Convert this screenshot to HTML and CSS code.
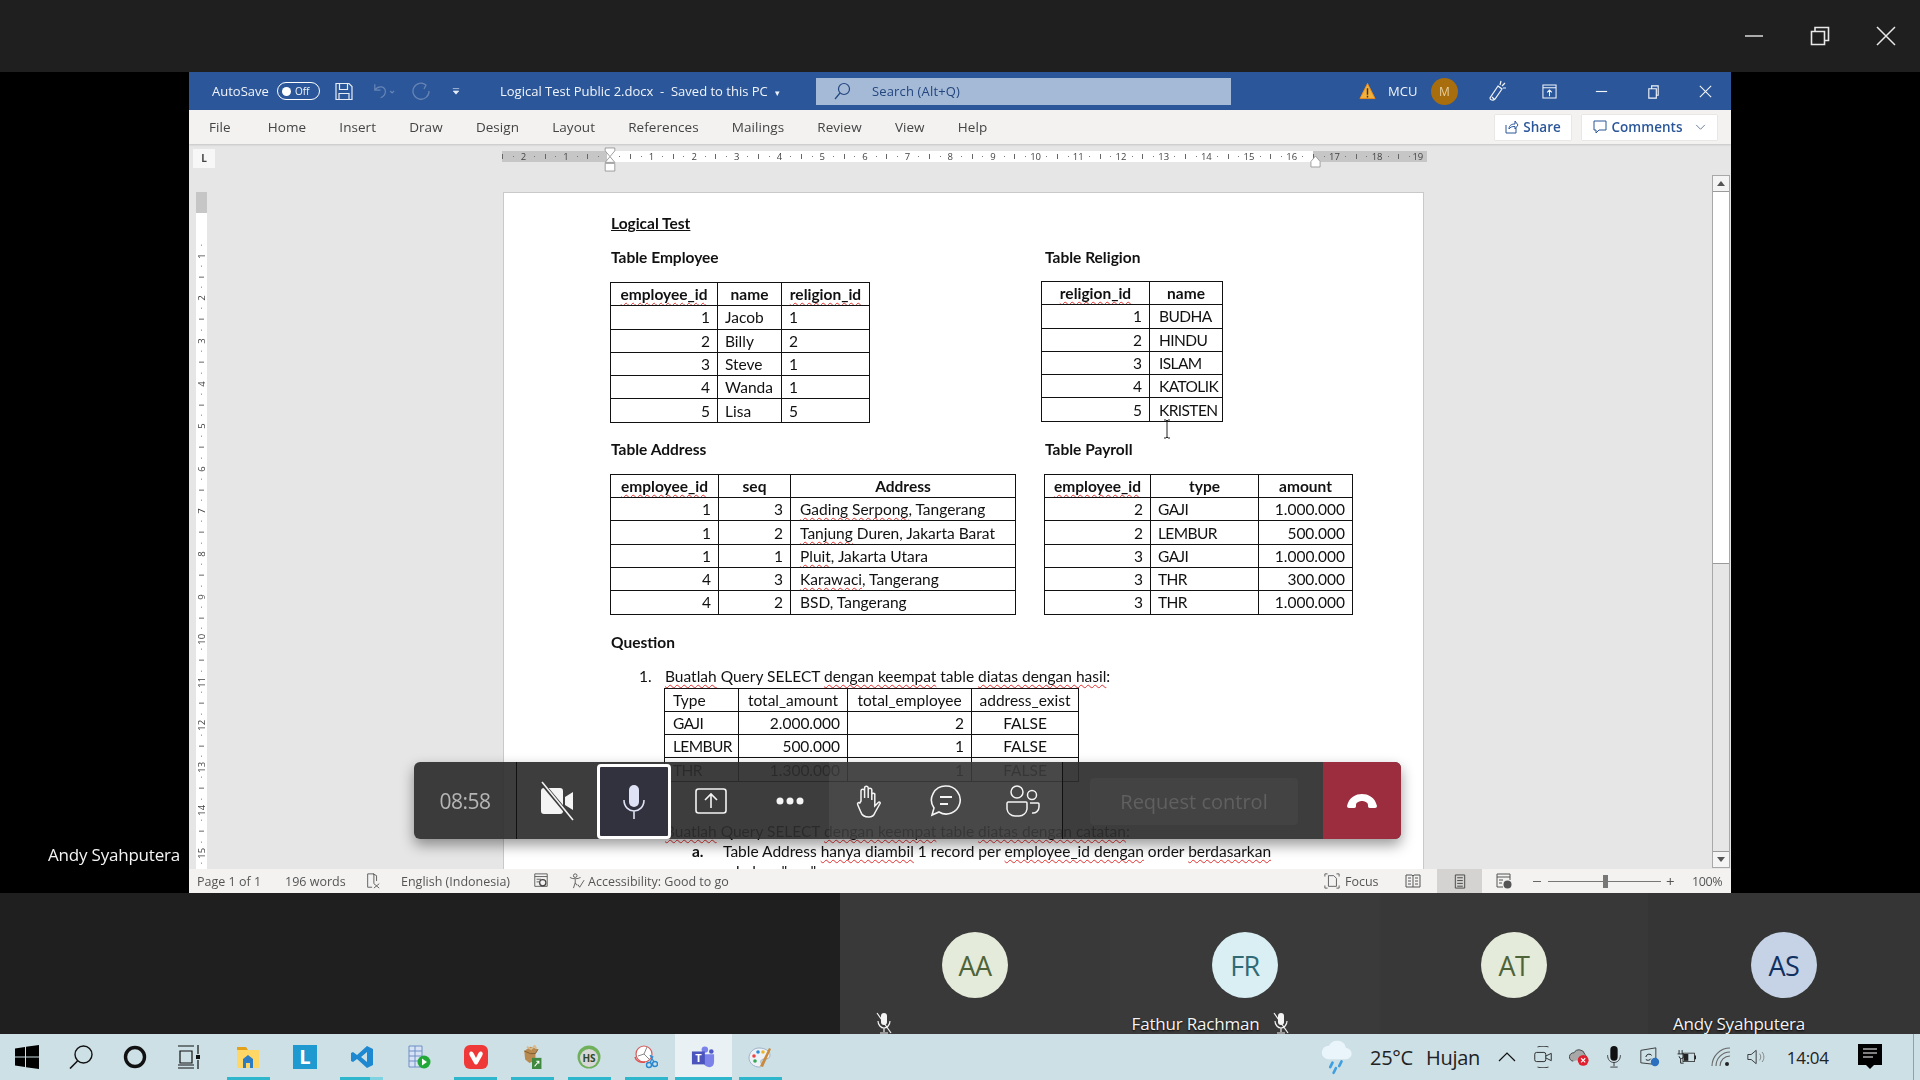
FILE: index.html
```html
<!DOCTYPE html>
<html lang="en">
<head>
    <meta charset="UTF-8">
    <title>Logical Test Public 2.docx - Word</title>
    <link rel="stylesheet" href="styles.css">
</head>
<body>
    <!-- Barra superior de la reunion -->
    <div class="topbar">
        <svg class="win-btn" viewBox="0 0 20 20"><path d="M1 10h18" stroke="#e8e8e8" stroke-width="1.4"/></svg>
        <svg class="win-btn" viewBox="0 0 20 20"><path d="M1.5 5.5h13v13h-13zM5 5.500V1.500h13.500v13h-4" fill="none" stroke="#e8e8e8" stroke-width="1.6"/></svg>
        <svg class="win-btn" viewBox="0 0 20 20"><path d="M1 1l18 18M19 1L1 19" stroke="#e8e8e8" stroke-width="1.5"/></svg>
    </div>

    <div class="stage">
        <div class="presenter-name">Andy Syahputera</div>

        <div class="word">
            <!-- Titulo -->
            <div class="word-title">
                <span class="autosave">AutoSave</span>
                <span class="toggle"><i></i>Off</span>
                <svg class="qa-save" viewBox="0 0 18 18"><path d="M1 1h13l3 3v13H1zM4.500 1v6h8V1M4 17v-6h10v6" fill="none" stroke="#e6ecf5" stroke-width="1.200"/></svg>
                <svg class="qa-undo" viewBox="0 0 26 18"><path d="M5 2v6h6M5 8c3-4 10-5 11 1 .5 3-2 6-5 7M21 9l2 2 2-2" fill="none" stroke="#6684b5" stroke-width="1.300"/></svg>
                <svg class="qa-redo" viewBox="0 0 22 18"><path d="M16 3A8 8 0 1 0 19 9M12 1l4 2-2 4" fill="none" stroke="#6684b5" stroke-width="1.300"/></svg>
                <svg class="qa-more" viewBox="0 0 10 10"><path d="M1 2h8M1.500 5h7L5 9z" fill="#e6ecf5" stroke="#e6ecf5" stroke-width=".8"/></svg>
                <span class="doc-name">Logical Test Public 2.docx &nbsp;-&nbsp; Saved to this PC &nbsp;<small>▾</small></span>
                <div class="search-box">
                    <svg viewBox="0 0 18 18"><circle cx="11" cy="7" r="5.500" fill="none" stroke="#23467f" stroke-width="1.200"/><path d="M7 11l-5 6" stroke="#23467f" stroke-width="1.200"/></svg>
                    <span>Search (Alt+Q)</span>
                </div>
                <div class="title-right">
                    <svg class="warn" viewBox="0 0 18 18"><path d="M9 1l8 16H1z" fill="#f2b13b" stroke="#e58a1f"/><path d="M9 6v7M9 14v2" stroke="#333" stroke-width="1.500"/></svg>
                    <span class="acct">MCU</span>
                    <span class="acct-avatar">M</span>
                    <span class="tb-cell tb-pen"><svg viewBox="0 0 20 22"><path d="M11 6l4 3-7 10c-2 2-5 1-5-1zM5 17l2 2M14 1l-1 4M18 3l-3 3M19 8l-3 0" fill="none" stroke="#f2f5fa" stroke-width="1.200"/></svg></span>
                    <span class="tb-cell"><svg viewBox="0 0 16 16"><path d="M1 1h14v14H1zM1 4h14M8 13V7M5.500 9L8 6.500 10.500 9" fill="none" stroke="#f2f5fa" stroke-width="1.100"/></svg></span>
                    <span class="tb-cell"><svg viewBox="0 0 16 16"><path d="M2 8h12" stroke="#f2f5fa" stroke-width="1.200"/></svg></span>
                    <span class="tb-cell"><svg viewBox="0 0 16 16"><path d="M3 5h8v10H3zM6 5V2h7v10h-2" fill="none" stroke="#f2f5fa" stroke-width="1.200"/></svg></span>
                    <span class="tb-cell"><svg viewBox="0 0 16 16"><path d="M2 2l12 12M14 2L2 14" stroke="#f2f5fa" stroke-width="1.200"/></svg></span>
                </div>
            </div>

            <!-- Pestanas -->
            <div class="word-tabs">
                <span class="tab tab-file">File</span>
                <span class="tab">Home</span>
                <span class="tab">Insert</span>
                <span class="tab">Draw</span>
                <span class="tab">Design</span>
                <span class="tab">Layout</span>
                <span class="tab">References</span>
                <span class="tab">Mailings</span>
                <span class="tab">Review</span>
                <span class="tab">View</span>
                <span class="tab">Help</span>
                <div class="tab-actions">
                    <span class="tab-btn share-btn"><svg viewBox="0 0 14 14"><path d="M1 5v8h10V8M4 9c0-4 3-5 6-5V1l3 4-3 4V6.500C7 6.500 5 7 4 9z" fill="none" stroke="#2b579a"/></svg>Share</span>
                    <span class="tab-btn comments-btn"><svg viewBox="0 0 14 14"><path d="M1 1h12v9H6l-3 3v-3H1z" fill="none" stroke="#2b579a"/></svg>Comments<svg class="chev" viewBox="0 0 12 8"><path d="M1 1l5 5 5-5" fill="none" stroke="#5c6f8f"/></svg></span>
                </div>
            </div>

            <!-- Regla horizontal -->
            <div class="ruler-row">
                <span class="tab-stop">L</span>
                <div class="ruler">
                    <span>2</span><span>1</span><span></span><span>1</span><span>2</span><span>3</span><span>4</span><span>5</span><span>6</span><span>7</span><span>8</span><span>9</span><span>10</span><span>11</span><span>12</span><span>13</span><span>14</span><span>15</span><span>16</span><span>17</span><span>18</span><span class="ruler-end">19</span>
                    <svg class="indent-left" viewBox="0 0 12 26"><path d="M1 1h10v3L6 10 1 4zM6 10l5 6H1zM1 17h10v8H1z" fill="#fff" stroke="#9a9a9a"/></svg>
                    <svg class="indent-right" viewBox="0 0 12 14"><path d="M6 1l5 6v6H1V7z" fill="#fff" stroke="#9a9a9a"/></svg>
                </div>
            </div>

            <div class="doc-body">
                <div class="vruler">
                    <span></span><span>1</span><span>2</span><span>3</span><span>4</span><span>5</span><span>6</span><span>7</span><span>8</span><span>9</span><span>10</span><span>11</span><span>12</span><span>13</span><span>14</span><span>15</span>
                </div>

                <div class="canvas">
                    <div class="page">
                        <p class="doc-title">Logical Test</p>

                        <div class="doc-grid">
                            <section>
                                <h4>Table Employee</h4>
                                <table class="tbl tbl-employee">
                                    <tr><th><u>employee_id</u></th><th>name</th><th><u>religion_id</u></th></tr>
                                    <tr><td class="num">1</td><td>Jacob</td><td>1</td></tr>
                                    <tr><td class="num">2</td><td>Billy</td><td>2</td></tr>
                                    <tr><td class="num">3</td><td>Steve</td><td>1</td></tr>
                                    <tr><td class="num">4</td><td>Wanda</td><td>1</td></tr>
                                    <tr><td class="num">5</td><td>Lisa</td><td>5</td></tr>
                                </table>
                            </section>
                            <section>
                                <h4>Table Religion</h4>
                                <table class="tbl tbl-religion">
                                    <tr><th><u>religion_id</u></th><th>name</th></tr>
                                    <tr><td class="num">1</td><td class="caps">BUDHA</td></tr>
                                    <tr><td class="num">2</td><td class="caps">HINDU</td></tr>
                                    <tr><td class="num">3</td><td class="caps">ISLAM</td></tr>
                                    <tr><td class="num">4</td><td class="caps">KATOLIK</td></tr>
                                    <tr><td class="num">5</td><td class="caps">KRISTEN</td></tr>
                                </table>
                            </section>
                            <section>
                                <h4>Table Address</h4>
                                <table class="tbl tbl-address">
                                    <tr><th><u>employee_id</u></th><th>seq</th><th>Address</th></tr>
                                    <tr><td class="num">1</td><td class="num">3</td><td><u>Gading Serpong</u>, Tangerang</td></tr>
                                    <tr><td class="num">1</td><td class="num">2</td><td><u>Tanjung</u> Duren, Jakarta Barat</td></tr>
                                    <tr><td class="num">1</td><td class="num">1</td><td><u>Pluit</u>, Jakarta Utara</td></tr>
                                    <tr><td class="num">4</td><td class="num">3</td><td><u>Karawaci</u>, Tangerang</td></tr>
                                    <tr><td class="num">4</td><td class="num">2</td><td>BSD, Tangerang</td></tr>
                                </table>
                            </section>
                            <section>
                                <h4>Table Payroll</h4>
                                <table class="tbl tbl-payroll">
                                    <tr><th><u>employee_id</u></th><th>type</th><th>amount</th></tr>
                                    <tr><td class="num">2</td><td class="caps">GAJI</td><td class="num">1.000.000</td></tr>
                                    <tr><td class="num">2</td><td class="caps">LEMBUR</td><td class="num">500.000</td></tr>
                                    <tr><td class="num">3</td><td class="caps">GAJI</td><td class="num">1.000.000</td></tr>
                                    <tr><td class="num">3</td><td class="caps">THR</td><td class="num">300.000</td></tr>
                                    <tr><td class="num">3</td><td class="caps">THR</td><td class="num">1.000.000</td></tr>
                                </table>
                            </section>
                        </div>

                        <h4 class="question">Question</h4>
                        <p class="li"><b>1.</b><span><u>Buatlah</u> Query SELECT <u>dengan keempat</u> table <u>diatas dengan hasil</u>:</span></p>
                        <table class="tbl tbl-result">
                            <tr><td>Type</td><td class="mid">total_amount</td><td class="mid">total_employee</td><td class="mid">address_exist</td></tr>
                            <tr><td class="caps">GAJI</td><td class="num">2.000.000</td><td class="num">2</td><td class="mid">FALSE</td></tr>
                            <tr><td class="caps">LEMBUR</td><td class="num">500.000</td><td class="num">1</td><td class="mid">FALSE</td></tr>
                            <tr><td class="caps">THR</td><td class="num">1.300.000</td><td class="num">1</td><td class="mid">FALSE</td></tr>
                        </table>
                        <p class="li li-two"><b>2.</b><span><u>Buatlah</u> Query SELECT <u>dengan keempat</u> table <u>diatas dengan catatan</u>:</span></p>
                        <p class="li li-sub"><b>a.</b><span>Table Address <u>hanya diambil</u> 1 record per <u>employee_id dengan</u> order <u>berdasarkan</u></span></p>
                        <p class="li-cont">kolom "seq"</p>
                    </div>
                    <svg class="ibeam" viewBox="0 0 10 20"><path d="M2 1h2l1 1 1-1h2M5 2v16M2 19h2l1-1 1 1h2" fill="none" stroke="#222"/></svg>
                </div>

                <div class="vscroll">
                    <span class="sb-btn"><i class="arrow-up"></i></span>
                    <span class="sb-thumb"></span>
                    <span class="sb-btn sb-down"><i class="arrow-down"></i></span>
                </div>
            </div>

            <!-- Barra de estado -->
            <div class="word-status">
                <span class="st-page">Page 1 of 1</span>
                <span class="st-words">196 words</span>
                <svg class="st-ico" viewBox="0 0 16 18"><path d="M2 1h7v11M2 1v15h5M8 1l4 2v6M9 12l6 5M15 12l-6 5" fill="none" stroke="#555"/></svg>
                <span class="st-lang">English (Indonesia)</span>
                <svg class="st-ico st-macro" viewBox="0 0 16 18"><path d="M1 1h14v14H1zM1 4h14M3 7h5M3 10h3" fill="none" stroke="#555"/><circle cx="10" cy="11" r="3.500" fill="none" stroke="#444" stroke-width="1.400"/></svg>
                <svg class="st-ico st-access" viewBox="0 0 18 18"><circle cx="7" cy="3" r="2" fill="none" stroke="#555"/><path d="M1 5c3 2 9 2 12 0M7 7v4M5 17l2-6 2 3M10 13l2 3 5-8" fill="none" stroke="#555"/></svg>
                <span class="st-access-text">Accessibility: Good to go</span>
                <div class="st-right">
                    <svg class="st-ico" viewBox="0 0 18 18"><path d="M5 3h6l3 3v9H5zM1 4V1h3M17 4V1h-3M1 14v3h3M17 14v3h-3" fill="none" stroke="#555"/></svg>
                    <span class="st-focus">Focus</span>
                    <svg class="st-ico st-read" viewBox="0 0 16 16"><path d="M1 2h6l1 1 1-1h6v12H1zM8 3v11M3 5h3M3 8h3M3 11h3M10 5h3M10 8h3M10 11h3" fill="none" stroke="#555"/></svg>
                    <span class="st-print"><svg viewBox="0 0 12 16"><path d="M1 1h10v14H1zM3 4h6M3 7h6M3 10h6M3 13h6" fill="none" stroke="#444"/></svg></span>
                    <svg class="st-ico st-web" viewBox="0 0 16 16"><path d="M1 1h13v6M1 1v13h6M1 4h13M3 7h4M3 10h3" fill="none" stroke="#555"/><circle cx="11.500" cy="11.500" r="4" fill="#555"/></svg>
                    <span class="zoom-minus"></span>
                    <span class="zoom-track"><i></i></span>
                    <span class="zoom-plus">+</span>
                    <span class="zoom-val">100%</span>
                </div>
            </div>
        </div>

        <!-- Controles de la llamada -->
        <div class="call-bar">
            <span class="call-timer">08:58</span>
            <span class="call-btn btn-video"><svg viewBox="0 0 36 40"><path d="M2 10a3 3 0 0 1 3-3h16a3 3 0 0 1 3 3v20a3 3 0 0 1-3 3H5a3 3 0 0 1-3-3zM26 16l8-5v18l-8-5z" fill="#f4f4f4"/><path d="M3 2l30 36" stroke="#3a3a3a" stroke-width="4"/><path d="M3 1l31 38" stroke="#f4f4f4" stroke-width="1.600"/></svg></span>
            <span class="call-btn btn-mic"><svg viewBox="0 0 24 36"><rect x="7" y="1" width="10" height="22" rx="5" fill="#dfe1f5"/><path d="M2 16c0 7 5 11 10 11s10-4 10-11M12 27v8" fill="none" stroke="#dfe1f5" stroke-width="1.600"/></svg></span>
            <span class="call-btn btn-share"><svg viewBox="0 0 32 26"><rect x="1" y="1" width="30" height="24" rx="2.500" fill="none" stroke="#f4f4f4" stroke-width="1.600"/><path d="M16 20V6M10 12l6-6 6 6" fill="none" stroke="#f4f4f4" stroke-width="1.600"/></svg></span>
            <span class="call-btn btn-more"><svg viewBox="0 0 28 8"><circle cx="4" cy="4" r="3.500" fill="#f4f4f4"/><circle cx="14" cy="4" r="3.500" fill="#f4f4f4"/><circle cx="24" cy="4" r="3.500" fill="#f4f4f4"/></svg></span>
            <div class="call-lit">
                <span class="call-btn btn-hand"><svg viewBox="0 0 28 34"><path d="M7 17V7a1.800 1.800 0 0 1 3.600 0v7-10a1.800 1.800 0 0 1 3.600 0v10-8a1.800 1.800 0 0 1 3.600 0v10-6a1.800 1.800 0 0 1 3 0v12l3-3c2-2 3 0 2 1l-5 9c-1 3-3 4-6 4-4 0-7-2-8-5l-3-7c-1-2 1-3 2-2z" fill="none" stroke="#f4f4f4" stroke-width="1.500"/></svg></span>
                <span class="call-btn btn-chat"><svg viewBox="0 0 32 32"><path d="M16 1a14 14 0 1 1-7 26l-7 3 2-7A14 14 0 0 1 16 1z" fill="none" stroke="#f4f4f4" stroke-width="1.600"/><path d="M10 12h12M10 19h8" stroke="#f4f4f4" stroke-width="1.800"/></svg></span>
                <span class="call-btn btn-people"><svg viewBox="0 0 34 32"><circle cx="11" cy="7" r="6" fill="none" stroke="#f4f4f4" stroke-width="1.500"/><circle cx="26" cy="10" r="4.500" fill="none" stroke="#f4f4f4" stroke-width="1.500"/><path d="M2 17h18a1 1 0 0 1 1 1v6a8 8 0 0 1-8 7H9a8 8 0 0 1-8-7v-6zM24 18h8a1 1 0 0 1 1 1v3a6 6 0 0 1-7 6" fill="none" stroke="#f4f4f4" stroke-width="1.500"/></svg></span>
            </div>
            <span class="call-request">Request control</span>
            <span class="call-end"><svg viewBox="0 0 32 16"><path d="M1 13C3 4 10 1 16 1s13 3 15 12c0 2-2 2-3 2h-4c-2 0-2-1-2-3 0-3-4-4-6-4s-6 1-6 4c0 2 0 3-2 3H4c-1 0-3 0-3-2z" fill="#fff"/></svg></span>
        </div>
    </div>

    <!-- Participantes -->
    <div class="tiles">
        <div class="tile-blank"></div>
        <div class="tile tile-a">
            <span class="avatar av-green">AA</span>
            <span class="tile-name name-aa"><svg class="mute" viewBox="0 0 18 22"><rect x="6" y="1" width="6" height="12" rx="3" fill="#f4f4f4"/><path d="M3 9c0 4 3 7 6 7s6-3 6-7M9 16v4M5 21h8M2 1l14 20" fill="none" stroke="#f4f4f4" stroke-width="1.200"/></svg></span>
        </div>
        <div class="tile tile-b">
            <span class="avatar av-cyan">FR</span>
            <span class="tile-name name-fr">Fathur Rachman<svg class="mute" viewBox="0 0 18 22"><rect x="6" y="1" width="6" height="12" rx="3" fill="#f4f4f4"/><path d="M3 9c0 4 3 7 6 7s6-3 6-7M9 16v4M5 21h8M2 1l14 20" fill="none" stroke="#f4f4f4" stroke-width="1.200"/></svg></span>
        </div>
        <div class="tile tile-c">
            <span class="avatar av-green">AT</span>
        </div>
        <div class="tile tile-d">
            <span class="avatar av-blue">AS</span>
            <span class="tile-name name-as">Andy Syahputera</span>
        </div>
    </div>

    <!-- Barra de tareas -->
    <div class="taskbar">
        <span class="tk-sys"><svg viewBox="0 0 24 24"><path d="M0 3.500l10-1.500v9.500H0zM11 1.800L24 0v11.500H11zM0 12.500h10V22L0 20.500zM11 12.500h13V24l-13-1.800z" fill="#000"/></svg></span>
        <span class="tk-sys"><svg viewBox="0 0 24 24"><circle cx="14.500" cy="9.500" r="8.500" fill="none" stroke="#111" stroke-width="1.400"/><path d="M8.500 16L1 23.500" stroke="#111" stroke-width="1.600"/></svg></span>
        <span class="tk-sys"><svg viewBox="0 0 24 24"><circle cx="12" cy="12" r="9.500" fill="none" stroke="#111" stroke-width="3.400"/></svg></span>
        <span class="tk-sys tk-last"><svg viewBox="0 0 24 24"><path d="M1 1h16M1 23h16M1 4h0M3 6h12v12H3zM1 20h16M21 0v9M21 15v9" fill="none" stroke="#111" stroke-width="1.200"/><rect x="19" y="10" width="4" height="4" fill="#111"/></svg></span>

        <span class="tk-app running"><svg viewBox="0 0 24 24"><path d="M1 2h9l2 3H1z" fill="#e3a21a"/><path d="M1 5h22v18H1z" fill="#ffd766"/><path d="M7 23v-9l5-4 5 4v9h-3v-5h-4v5z" fill="#2d7dc4"/></svg></span>
        <span class="tk-app"><span class="app-l">L</span></span>
        <span class="tk-app running run-split"><svg viewBox="0 0 24 24"><path d="M17 1l6 3v16l-6 3L7 14l-4 3-2-1V8l2-1 4 3zM17 7l-6 5 6 5z" fill="#1e88d0"/></svg></span>
        <span class="tk-app"><svg viewBox="0 0 24 24"><path d="M2 1h13v21H2zM2 6h13M2 11h13M2 16h13M8 1v21" fill="#d7e3f5" stroke="#6f8fc7"/><circle cx="17" cy="17" r="6.500" fill="#22a838"/><path d="M15 13.500l5 3.500-5 3.500z" fill="#fff"/></svg></span>
        <span class="tk-app running"><svg viewBox="0 0 24 24"><rect x="0" y="0" width="24" height="24" rx="6" fill="#ef3939"/><path d="M6 7c2-1 3 0 4 2l2 4 2-4c1-2 2-3 4-2 1 1 1 2 0 4l-4 7c-1 2-3 2-4 0l-4-7c-1-2-1-3 0-4z" fill="#fff"/></svg></span>
        <span class="tk-app running"><svg viewBox="0 0 24 28"><path d="M3 7l7-5 9 3-3 5v8l-7 3-5-4z" fill="#b98a50"/><path d="M3 7l7 3 6 0 3-5" fill="none" stroke="#7a5829"/><path d="M6 2l5 3 4-4 2 3" fill="none" stroke="#d9b98a" stroke-width="2"/><rect x="12" y="15" width="11" height="13" fill="#3f8a3f"/><path d="M15 25l5-6M17 19h3v3" fill="none" stroke="#fff" stroke-width="1.200"/></svg></span>
        <span class="tk-app running"><svg viewBox="0 0 24 24"><circle cx="12" cy="12" r="11.500" fill="#6fb05b"/><circle cx="12" cy="13" r="9" fill="#d8d8d8"/><text x="12" y="17" text-anchor="middle" class="hs-text">HS</text></svg></span>
        <span class="tk-app running"><svg viewBox="0 0 24 24"><circle cx="10" cy="9" r="8" fill="#fff" stroke="#d65a5a" stroke-width="1.200"/><path d="M10 9l3-7M10 9l-6 2M10 9l5 5" stroke="#888"/><path d="M1 12c1 4 5 6 10 5" fill="none" stroke="#e05050" stroke-width="1.500"/><circle cx="15" cy="20" r="2.500" fill="none" stroke="#2a88d0" stroke-width="1.400"/><circle cx="21" cy="19" r="2.500" fill="none" stroke="#2a88d0" stroke-width="1.400"/><path d="M16 18l3-7M20 17l-4-7" stroke="#2a88d0" stroke-width="1.200"/></svg></span>
        <span class="tk-app running active"><svg viewBox="0 0 26 24"><circle cx="15" cy="4" r="3.500" fill="#7b83eb"/><circle cx="22" cy="6" r="2.500" fill="#5059c9"/><path d="M12 9h13v8c0 4-2 6-5 6s-6-2-8-6z" fill="#7b83eb"/><rect x="1" y="6" width="14" height="14" fill="#4b53bc"/><text x="8" y="17" text-anchor="middle" class="teams-text">T</text></svg></span>
        <span class="tk-app running"><svg viewBox="0 0 24 24"><path d="M11 3C5 3 1 8 1 13s5 9 10 9c3 0 3-2 2-4-1-3 1-4 4-4 3 0 5-1 5-4 0-4-5-7-11-7z" fill="#eef2f7" stroke="#9eb4cc"/><circle cx="6" cy="11" r="1.800" fill="#e44"/><circle cx="10" cy="7" r="1.800" fill="#2a8ad8"/><circle cx="15" cy="7" r="1.800" fill="#e8b72a"/><circle cx="7" cy="16" r="1.800" fill="#35a853"/><path d="M12 21L21 3l2 1-8 18z" fill="#c98a3c"/></svg></span>

        <div class="tray">
            <svg class="tray-rain" viewBox="0 0 32 32"><path d="M8 18a6 6 0 0 1 1-12 8 8 0 0 1 15 2 5 5 0 0 1 0 10z" fill="#eaf4fb"/><path d="M12 21l-2 4M20 20l-2 4M15 26l-2 4" stroke="#3f9fe0" stroke-width="2.400" stroke-linecap="round"/></svg>
            <span class="tray-temp">25°C</span>
            <span class="tray-cond">Hujan</span>
            <span class="tray-cell tray-chev"><svg viewBox="0 0 18 10"><path d="M1 9l8-8 8 8" fill="none" stroke="#111" stroke-width="1.200"/></svg></span>
            <span class="tray-cell"><svg viewBox="0 0 20 24"><path d="M4 1c3-1 9-1 12 0M4 23c3 1 9 1 12 0" fill="none" stroke="#333"/><rect x="1" y="7" width="12" height="10" rx="2" fill="none" stroke="#222"/><path d="M13 11l6-3v8l-6-3" fill="none" stroke="#222"/></svg></span>
            <span class="tray-cell"><svg viewBox="0 0 24 22"><path d="M5 16a5 5 0 0 1 1-10 7 7 0 0 1 13 2 4 4 0 0 1 2 4" fill="#a8a8a8" stroke="#333"/><circle cx="17" cy="15" r="6.500" fill="#e0202f"/><path d="M14.500 12.500l5 5M19.500 12.500l-5 5" stroke="#fff" stroke-width="1.300"/></svg></span>
            <span class="tray-cell"><svg viewBox="0 0 16 24"><rect x="4" y="0" width="8" height="16" rx="4" fill="#111"/><path d="M1 10c0 5 3 8 7 8s7-3 7-8M8 18v4M4 23h8" fill="none" stroke="#333"/></svg></span>
            <span class="tray-cell"><svg viewBox="0 0 24 24"><path d="M1 4l18-3v20L1 19z" fill="none" stroke="#222"/><path d="M7 12a4 4 0 0 1 7-2M13 14a4 4 0 0 1-6 1" fill="none" stroke="#222" stroke-width="1.200"/><circle cx="18" cy="18" r="5" fill="#2c6fbf"/></svg></span>
            <span class="tray-cell"><svg viewBox="0 0 26 20"><path d="M4 1v5M8 1v5M2 6h8v3a3 3 0 0 1-6 0M6 12v6h4" fill="none" stroke="#222" stroke-width="1.200"/><rect x="9" y="5" width="15" height="11" fill="none" stroke="#222"/><rect x="10" y="6" width="6" height="9" fill="#222"/><path d="M24 8h2v5h-2" fill="#222"/></svg></span>
            <span class="tray-cell"><svg viewBox="0 0 20 20"><path d="M1 19A18 18 0 0 1 19 1M5 19A14 14 0 0 1 19 5M9 19A10 10 0 0 1 19 9" fill="none" stroke="#666" stroke-width="1.100"/><circle cx="16" cy="17" r="2" fill="#222"/></svg></span>
            <span class="tray-cell"><svg viewBox="0 0 24 20"><path d="M1 7h4l6-5v16l-6-5H1z" fill="none" stroke="#222"/><path d="M15 6c2 2 2 6 0 8M18 4c3 3 3 9 0 12" fill="none" stroke="#777"/></svg></span>
            <span class="tray-time">14:04</span>
            <span class="tray-notif"><svg viewBox="0 0 24 26"><path d="M0 0h24v21h-8l-4 4-4-4H0z" fill="#000"/><path d="M5 5h14M5 9h14M5 13h10" stroke="#fff" stroke-width="1.200"/></svg></span>
            <span class="show-desktop"></span>
        </div>
    </div>
</body>
</html>
```

FILE: styles.css
```css
body {
    margin: 0;
    width: 1920px;
    height: 1080px;
    overflow: hidden;
    background: #000;
    font-family: "Open Sans", sans-serif;
    display: flex;
    flex-direction: column;
}

svg {
    display: block;
}

/* Barra superior */
.topbar {
    height: 72px;
    background: #1f1f1f;
    display: flex;
    justify-content: flex-end;
    align-items: center;
    gap: 46px;
    padding-right: 24px;
    box-sizing: border-box;
}

.win-btn {
    width: 20px;
    height: 20px;
}

/* Zona central */
.stage {
    height: 821px;
    background: #000;
    display: flex;
    justify-content: center;
    position: relative;
    filter: blur(0.35px);
}

.presenter-name {
    position: absolute;
    left: 48px;
    top: 771px;
    color: #f4f4f4;
    font-size: 17px;
    letter-spacing: -0.2px;
}

.word {
    width: 1542px;
    display: flex;
    flex-direction: column;
    background: #e6e6e6;
}

/* Titulo de Word */
.word-title {
    height: 38px;
    background: #2b579a;
    display: flex;
    align-items: center;
    color: #f0f3f8;
    font-size: 13px;
    flex: none;
}

.autosave {
    margin-left: 23px;
    width: 58px;
}

.toggle {
    margin-left: 7px;
    width: 43px;
    height: 18px;
    box-sizing: border-box;
    border: 1px solid #fff;
    border-radius: 9px;
    display: flex;
    align-items: center;
    font-size: 10px;
    gap: 4px;
    padding-left: 4px;
}

.toggle i {
    width: 9px;
    height: 9px;
    border-radius: 50%;
    background: #fff;
}

.qa-save { margin-left: 15px; width: 18px; height: 19px; }
.qa-undo { margin-left: 17px; width: 25px; height: 18px; }
.qa-redo { margin-left: 15px; width: 22px; height: 18px; }
.qa-more { margin-left: 20px; width: 8px; height: 8px; }

.doc-name {
    margin-left: 40px;
    width: 316px;
    white-space: nowrap;
}

.doc-name small {
    font-size: 9px;
}

.search-box {
    width: 415px;
    height: 27px;
    background: #a5bad7;
    display: flex;
    align-items: center;
    color: #23467f;
    padding-left: 17px;
    box-sizing: border-box;
    gap: 21px;
    letter-spacing: 0.15px;
}

.search-box svg {
    width: 18px;
    height: 18px;
}

.title-right {
    margin-left: auto;
    display: flex;
    align-items: center;
}

.warn {
    width: 17px;
    height: 18px;
    margin-right: 12px;
}

.acct {
    width: 43px;
}

.acct-avatar {
    width: 27px;
    height: 27px;
    border-radius: 50%;
    background: #a86d0c;
    color: #e7cf9f;
    font-size: 12px;
    display: flex;
    align-items: center;
    justify-content: center;
    margin-right: 13px;
}

.tb-cell {
    width: 52px;
    display: flex;
    justify-content: center;
}

.tb-cell svg {
    width: 15px;
    height: 15px;
}

.tb-cell.tb-pen svg {
    width: 20px;
    height: 22px;
}

/* Pestanas */
.word-tabs {
    height: 34px;
    background: #f3f2f1;
    display: flex;
    align-items: center;
    gap: 33.200px;
    padding-left: 20px;
    padding-right: 14px;
    color: #444;
    font-size: 13.500px;
    letter-spacing: 0.05px;
    box-shadow: 0 1px 2px rgba(0, 0, 0, 0.15);
    flex: none;
    position: relative;
}

.tab-file {
    margin-right: 4px;
}

.tab-actions {
    margin-left: auto;
    display: flex;
    gap: 11px;
}

.tab-btn {
    height: 25px;
    background: #fff;
    display: flex;
    align-items: center;
    justify-content: center;
    gap: 4px;
    color: #2b579a;
    font-weight: 600;
    font-size: 13.500px;
    box-shadow: 0 0 1px rgba(0, 0, 0, 0.25);
}

.tab-btn svg {
    width: 14px;
    height: 14px;
}

.share-btn { width: 76px; }
.comments-btn { width: 135px; }

.tab-btn .chev {
    width: 11px;
    height: 7px;
    margin-left: 8px;
}

/* Regla horizontal */
.ruler-row {
    height: 32px;
    display: flex;
    align-items: flex-start;
    flex: none;
}

.tab-stop {
    margin: 5px 0 0 4px;
    width: 22px;
    height: 19px;
    background: #f7f7f7;
    font-size: 10px;
    font-weight: 700;
    color: #444;
    text-align: center;
    line-height: 19px;
}

.ruler {
    margin: 7px 0 0 287px;
    width: 925px;
    height: 11px;
    display: flex;
    position: relative;
    background: linear-gradient(to right, #c6c6c6 105px, #fff 105px, #fff 811px, #c6c6c6 811px);
}

.ruler span {
    flex: none;
    width: 42.700px;
    font-size: 9.500px;
    line-height: 11px;
    color: #444;
    text-align: center;
    background:
        linear-gradient(#666, #666) 0 50% / 1px 5px no-repeat,
        linear-gradient(#777, #777) 10.700px 50% / 1px 1px no-repeat,
        linear-gradient(#777, #777) 32px 50% / 1px 1px no-repeat;
}

.ruler .ruler-end {
    width: 25px;
    text-align: left;
    text-indent: 14px;
    background-size: 1px 5px, 1px 1px, 0 0;
}

.indent-left {
    position: absolute;
    left: 102px;
    top: -4px;
    width: 12px;
    height: 25px;
}

.indent-right {
    position: absolute;
    left: 808px;
    top: 4px;
    width: 11px;
    height: 13px;
}

/* Documento */
.doc-body {
    flex: 1;
    display: flex;
    min-height: 0;
}

.vruler {
    margin: 16px 0 0 7px;
    width: 11px;
    flex: none;
    background: linear-gradient(#c6c6c6 21px, #fff 21px);
}

.vruler span {
    display: flex;
    align-items: center;
    justify-content: center;
    height: 42.650px;
    font-size: 9.500px;
    line-height: 11px;
    color: #444;
    writing-mode: vertical-rl;
    transform: rotate(180deg);
    background:
        linear-gradient(#666, #666) 50% 0 / 5px 1px no-repeat,
        linear-gradient(#777, #777) 50% 10.700px / 1px 1px no-repeat,
        linear-gradient(#777, #777) 50% 32px / 1px 1px no-repeat;
}

.canvas {
    flex: 1;
    overflow: hidden;
    position: relative;
}

.page {
    margin: 17px 0 0 297px;
    width: 919px;
    height: 900px;
    box-sizing: border-box;
    background: #fff;
    outline: 1px solid #c9c9c9;
    padding: 20px 0 0 107px;
    color: #111;
    font-family: Lato, "Open Sans", sans-serif;
    font-size: 15.500px;
}

.page p,
.page h4 {
    margin: 0;
    height: 20px;
    line-height: 20px;
    white-space: nowrap;
}

.page h4 {
    font-size: 15.500px;
    font-weight: 700;
}

.page u {
    text-decoration: underline wavy #e03030 1px;
    text-underline-offset: 2px;
    text-decoration-skip-ink: none;
}

.doc-title {
    font-weight: 700;
    text-decoration: underline;
    margin-bottom: 14px !important;
}

.doc-grid {
    display: grid;
    grid-template-columns: 434px 1fr;
    row-gap: 16px;
}

.doc-grid h4 {
    margin-bottom: 15px;
}

/* Tablas */
.tbl {
    border-collapse: collapse;
    table-layout: fixed;
    margin-left: -1px;
}

.tbl th,
.tbl td {
    border: 1.500px solid #111;
    height: 23.300px;
    padding: 0 7px 0 7px;
    box-sizing: border-box;
    white-space: nowrap;
    overflow: hidden;
}

.tbl th {
    font-weight: 700;
    text-align: center;
    padding: 0;
}

.tbl td.num { text-align: right; }
.tbl td.mid { text-align: center; padding: 0; }
.tbl td.caps { letter-spacing: -0.6px; }

.tbl-employee { width: 260px; }
.tbl-employee th:nth-child(1) { width: 107px; }
.tbl-employee th:nth-child(2) { width: 64px; }

.tbl-religion { width: 182px; margin: -1px 0 0 -4px; }
.tbl-religion th:nth-child(1) { width: 108px; }
.tbl-religion td { padding-left: 9px; }

.tbl-address { width: 406px; }
.tbl-address th:nth-child(1) { width: 108px; }
.tbl-address th:nth-child(2) { width: 72px; }
.tbl-address td { padding-left: 9px; }

.tbl-payroll { width: 309px; }
.tbl-payroll th:nth-child(1) { width: 106px; }
.tbl-payroll th:nth-child(2) { width: 108px; }

.tbl-result {
    width: 415px;
    margin: 2px 0 0 53px;
}

.tbl-result td:nth-child(1) { width: 74px; padding-left: 8px; }
.tbl-result td:nth-child(2) { width: 109px; }
.tbl-result td:nth-child(3) { width: 124px; }

.question {
    margin-top: 17px !important;
    margin-bottom: 14px !important;
}

.li {
    display: flex;
    padding-left: 28px;
}

.li b {
    width: 26px;
    flex: none;
    font-weight: 400;
}

.li-two {
    margin-top: 39px !important;
}

.li-sub {
    padding-left: 81px;
}

.li-sub b {
    width: 31px;
    font-weight: 700;
}

.li-cont {
    padding-left: 125px;
}

.ibeam {
    position: absolute;
    left: 955px;
    top: 243px;
    width: 10px;
    height: 20px;
}

/* Barra de desplazamiento */
.vscroll {
    width: 16px;
    margin: 0 2px 2px 0;
    flex: none;
    display: flex;
    flex-direction: column;
    background: #e6e6e6;
    outline: 1px solid #a8a8a8;
}

.sb-btn {
    height: 15px;
    background: #f4f4f4;
    border-bottom: 1px solid #9a9a9a;
    display: flex;
    align-items: center;
    justify-content: center;
    flex: none;
}

.sb-down {
    margin-top: auto;
    border-bottom: 0;
    border-top: 1px solid #9a9a9a;
}

.arrow-up {
    border: 4px solid transparent;
    border-top: 0;
    border-bottom: 5px solid #555;
}

.arrow-down {
    border: 4px solid transparent;
    border-bottom: 0;
    border-top: 5px solid #555;
}

.sb-thumb {
    height: 371px;
    background: #fff;
    border-bottom: 1px solid #9a9a9a;
    flex: none;
}

/* Barra de estado */
.word-status {
    height: 24px;
    flex: none;
    background: #f3f2f1;
    display: flex;
    align-items: center;
    font-size: 12.500px;
    color: #555;
    white-space: nowrap;
    position: relative;
}

.st-ico {
    width: 16px;
    height: 16px;
    flex: none;
}

.st-page { margin-left: 8px; width: 88px; }
.st-words { width: 80px; }
.st-lang { margin-left: 20px; width: 132px; }
.st-access { margin-left: 20px; }
.st-access-text { margin-left: 3px; }

.st-right {
    margin-left: auto;
    display: flex;
    align-items: center;
    height: 100%;
}

.st-focus { margin-left: 5px; width: 60px; }
.st-read { margin-right: 16px; }

.st-print {
    width: 45px;
    height: 100%;
    background: #d4d3d2;
    display: flex;
    align-items: center;
    justify-content: center;
}

.st-print svg {
    width: 12px;
    height: 15px;
}

.st-web { margin-left: 14px; }

.zoom-minus {
    margin-left: 21px;
    width: 8px;
    height: 1px;
    background: #666;
}

.zoom-track {
    margin-left: 7px;
    width: 113px;
    height: 1px;
    background: #777;
    position: relative;
}

.zoom-track i {
    position: absolute;
    left: 55px;
    top: -6px;
    width: 5px;
    height: 13px;
    background: #777;
}

.zoom-plus {
    margin-left: 5px;
    width: 26px;
    font-size: 15px;
}

.zoom-val {
    width: 39px;
    letter-spacing: -0.4px;
}

/* Controles de llamada */
.call-bar {
    position: absolute;
    left: 414px;
    top: 690px;
    width: 987px;
    height: 77px;
    border-radius: 6px;
    background: rgba(44, 44, 44, 0.92);
    box-shadow: 0 6px 14px rgba(0, 0, 0, 0.4);
    display: flex;
    overflow: hidden;
}

.call-timer {
    width: 103px;
    box-sizing: border-box;
    border-right: 1px solid #111;
    color: #b5b5b5;
    font-size: 21px;
    letter-spacing: -0.5px;
    display: flex;
    align-items: center;
    justify-content: center;
}

.call-btn {
    display: flex;
    align-items: center;
    justify-content: center;
    box-sizing: border-box;
    flex: none;
}

.btn-video { width: 80px; }
.btn-video svg { width: 36px; height: 40px; }

.btn-mic {
    width: 74px;
    margin-top: 2px;
    border: 3px solid #fff;
    border-radius: 4px;
    background: #32323f;
}

.btn-mic svg { width: 24px; height: 36px; }

.btn-share { width: 80px; }
.btn-share svg { width: 32px; height: 26px; }

.btn-more { width: 78px; }
.btn-more svg { width: 28px; height: 8px; }

.call-lit {
    display: flex;
    width: 234px;
    background: rgba(255, 255, 255, 0.06);
    border-right: 1px solid #111;
    box-sizing: border-box;
}

.btn-hand { width: 78px; }
.btn-hand svg { width: 28px; height: 34px; }

.btn-chat { width: 77px; }
.btn-chat svg { width: 32px; height: 32px; }

.btn-people { width: 78px; }
.btn-people svg { width: 34px; height: 32px; }

.call-request {
    margin: 16px 0 14px 27px;
    width: 208px;
    border-radius: 4px;
    background: rgba(255, 255, 255, 0.03);
    color: #606060;
    font-size: 20px;
    display: flex;
    align-items: center;
    justify-content: center;
}

.call-end {
    margin-left: auto;
    width: 78px;
    background: #9b2d3f;
    display: flex;
    align-items: center;
    justify-content: center;
}

.call-end svg {
    width: 32px;
    height: 16px;
}

/* Participantes */
.tiles {
    height: 141px;
    display: flex;
    color: #f4f4f4;
}

.tile-blank {
    width: 840px;
    background: #1f1f1f;
}

.tile {
    display: flex;
    flex-direction: column;
    align-items: center;
    position: relative;
    padding-top: 39px;
    box-sizing: border-box;
    overflow: hidden;
}

.tile-a { width: 270px; background: #393939; }
.tile-b { width: 270px; background: #3a3a3a; }
.tile-c { width: 268px; background: #383838; }
.tile-d { width: 272px; background: #353535; }

.avatar {
    width: 66px;
    height: 66px;
    border-radius: 50%;
    display: flex;
    align-items: center;
    justify-content: center;
    font-size: 27px;
    font-family: "Open Sans", sans-serif;
    letter-spacing: -0.5px;
}

.av-green { background: #e4ebda; color: #4f6339; }
.av-cyan { background: #d9eff3; color: #2f6a75; }
.av-blue { background: #c6d3e6; color: #12305f; }

.tile-name {
    margin-top: 14px;
    display: flex;
    align-items: center;
    font-size: 17px;
    letter-spacing: -0.2px;
    white-space: nowrap;
    height: 22px;
    text-shadow: 0 1px 2px #000;
}

.name-aa { margin-left: -196px; }
.name-fr { margin-left: -68px; }
.name-as { margin-left: -90px; }

.mute {
    width: 18px;
    height: 22px;
    margin-left: 13px;
}

/* Barra de tareas */
.taskbar {
    height: 46px;
    background: #cde0e6;
    display: flex;
    align-items: center;
}

.tk-sys {
    width: 54px;
    display: flex;
    justify-content: center;
}

.tk-sys svg {
    width: 24px;
    height: 24px;
}

.tk-last {
    margin-right: 3.600px;
}

.tk-app {
    width: 56.900px;
    height: 100%;
    display: flex;
    align-items: center;
    justify-content: center;
    position: relative;
    font-family: "Open Sans", sans-serif;
}

.tk-app svg {
    width: 24px;
    height: 24px;
}

.tk-app.running::after {
    content: "";
    position: absolute;
    left: 7px;
    bottom: 0;
    width: 43px;
    height: 3px;
    background: #2eb6cc;
}

.tk-app.run-split::after {
    background: linear-gradient(to right, #2eb6cc 30px, #7fd3e0 30px);
}

.tk-app.active {
    background: #e9f1f4;
}

.tk-app.active::after {
    left: 0;
    width: 100%;
}

.app-l {
    width: 24px;
    height: 24px;
    background: #1f9ad0;
    color: #fff;
    font-weight: 700;
    font-size: 20px;
    line-height: 24px;
    text-align: center;
}

.hs-text {
    font-size: 10px;
    font-weight: 700;
    fill: #2e4a2e;
}

.teams-text {
    font-size: 12px;
    font-weight: 700;
    fill: #fff;
}

.tray {
    position: absolute;
    left: 1319px;
    right: 0;
    height: 46px;
    display: flex;
    align-items: center;
    color: #222;
}

.tray-rain {
    width: 36px;
    height: 36px;
    flex: none;
}

.tray-temp {
    margin-left: 15px;
    width: 56px;
    font-size: 20px;
    letter-spacing: -0.3px;
}

.tray-cond {
    width: 62px;
    font-size: 20px;
    letter-spacing: -0.3px;
}

.tray-cell {
    width: 35.700px;
    display: flex;
    justify-content: center;
    flex: none;
}

.tray-cell svg {
    width: 20px;
    height: 22px;
}

.tray-chev {
    width: 37px;
}

.tray-chev svg {
    width: 18px;
    height: 10px;
}

.tray-time {
    margin-left: 12px;
    width: 46px;
    font-size: 17px;
    letter-spacing: -0.3px;
}

.tray-notif {
    margin-left: 25px;
    width: 24px;
}

.tray-notif svg {
    width: 24px;
    height: 26px;
}

.show-desktop {
    margin-left: 31px;
    width: 1px;
    height: 46px;
    background: #8da3aa;
}
```
